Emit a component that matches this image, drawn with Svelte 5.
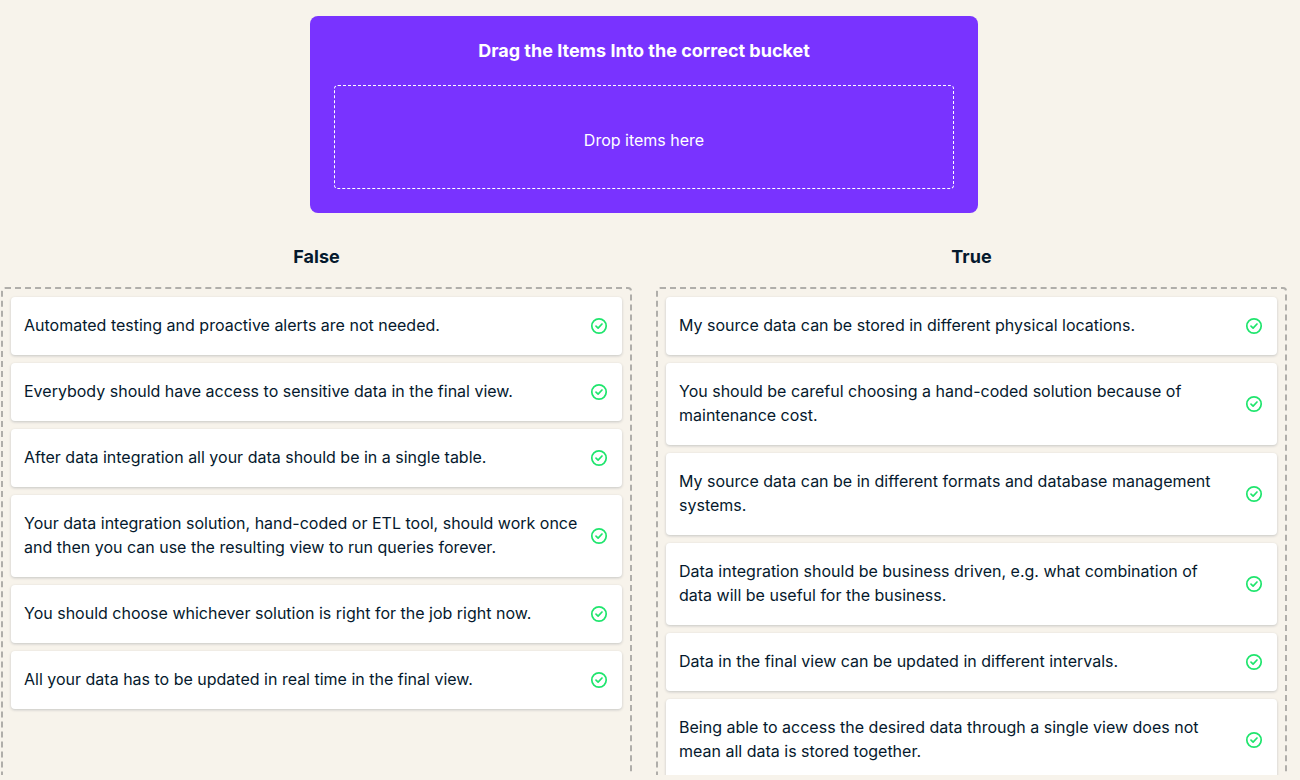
<script>
  const buckets = [
    {
      name: 'False',
      items: [
        'Automated testing and proactive alerts are not needed.',
        'Everybody should have access to sensitive data in the final view.',
        'After data integration all your data should be in a single table.',
        'Your data integration solution, hand-coded or ETL tool, should work once and then you can use the resulting view to run queries forever.',
        'You should choose whichever solution is right for the job right now.',
        'All your data has to be updated in real time in the final view.'
      ]
    },
    {
      name: 'True',
      items: [
        'My source data can be stored in different physical locations.',
        'You should be careful choosing a hand-coded solution because of maintenance cost.',
        'My source data can be in different formats and database management systems.',
        'Data integration should be business driven, e.g. what combination of data will be useful for the business.',
        'Data in the final view can be updated in different intervals.',
        'Being able to access the desired data through a single view does not mean all data is stored together.'
      ]
    }
  ];
</script>

<div class="page">
  <main>
    <section class="source">
      <h1>Drag the Items Into the correct bucket</h1>
      <div class="drop">Drop items here</div>
    </section>

    <div class="buckets">
      {#each buckets as bucket}
        <section class="bucket">
          <h2>{bucket.name}</h2>
          <ul>
            {#each bucket.items as item}
              <li>
                <span class="label">{item}</span>
                <svg viewBox="0 0 18 18" role="img" aria-label="Correct">
                  <circle cx="9" cy="9" r="7.2" />
                  <path d="M6 9.2l2.1 2L12 7" />
                </svg>
              </li>
            {/each}
          </ul>
        </section>
      {/each}
    </div>
  </main>
</div>

<style>
  :global(body) {
    margin: 0;
    background: #f7f3eb;
  }

  .page {
    box-sizing: border-box;
    height: 100vh;
    padding-bottom: 5px;
    color: #05192d;
    font: 16px/24px Inter, "Noto Sans", sans-serif;
  }

  main {
    box-sizing: border-box;
    height: 100%;
    overflow: hidden;
    padding: 16px 13px 0 1px;
  }

  .source {
    box-sizing: border-box;
    max-width: 668px;
    margin: 0 auto;
    padding: 24px;
    border-radius: 8px;
    background: #7933ff;
    color: #fff;
    text-align: center;
  }

  h1,
  h2 {
    margin: 0;
    font-size: 18px;
    font-weight: 700;
    text-align: center;
  }

  h1 {
    margin-bottom: 24px;
    line-height: 21px;
  }

  .drop {
    padding: 42px 16px 36px;
    border: 1px dashed #fff;
    border-radius: 4px;
  }

  .buckets {
    display: grid;
    grid-template-columns: 1fr 1fr;
    gap: 24px;
    min-height: 640px;
    margin-top: 32px;
  }

  .bucket {
    display: flex;
    flex-direction: column;
  }

  h2 {
    margin-bottom: 18px;
    line-height: 24px;
  }

  ul {
    flex: 1;
    display: flex;
    flex-direction: column;
    gap: 8px;
    margin: 0;
    padding: 8px;
    border: 2px dashed #b0aeaa;
    border-radius: 4px;
    list-style: none;
  }

  li {
    display: flex;
    align-items: center;
    gap: 10px;
    padding: 0 14px 0 13px;
    border-radius: 4px;
    background: #fff;
    box-shadow: 0 1px 3px rgba(5, 25, 45, 0.2);
  }

  .label {
    flex: 1;
    padding: 16px 0 18px;
  }

  svg {
    flex: none;
    width: 18px;
    height: 18px;
    fill: none;
    stroke: #1fe56d;
    stroke-width: 1.7;
    stroke-linecap: round;
    stroke-linejoin: round;
  }
</style>
